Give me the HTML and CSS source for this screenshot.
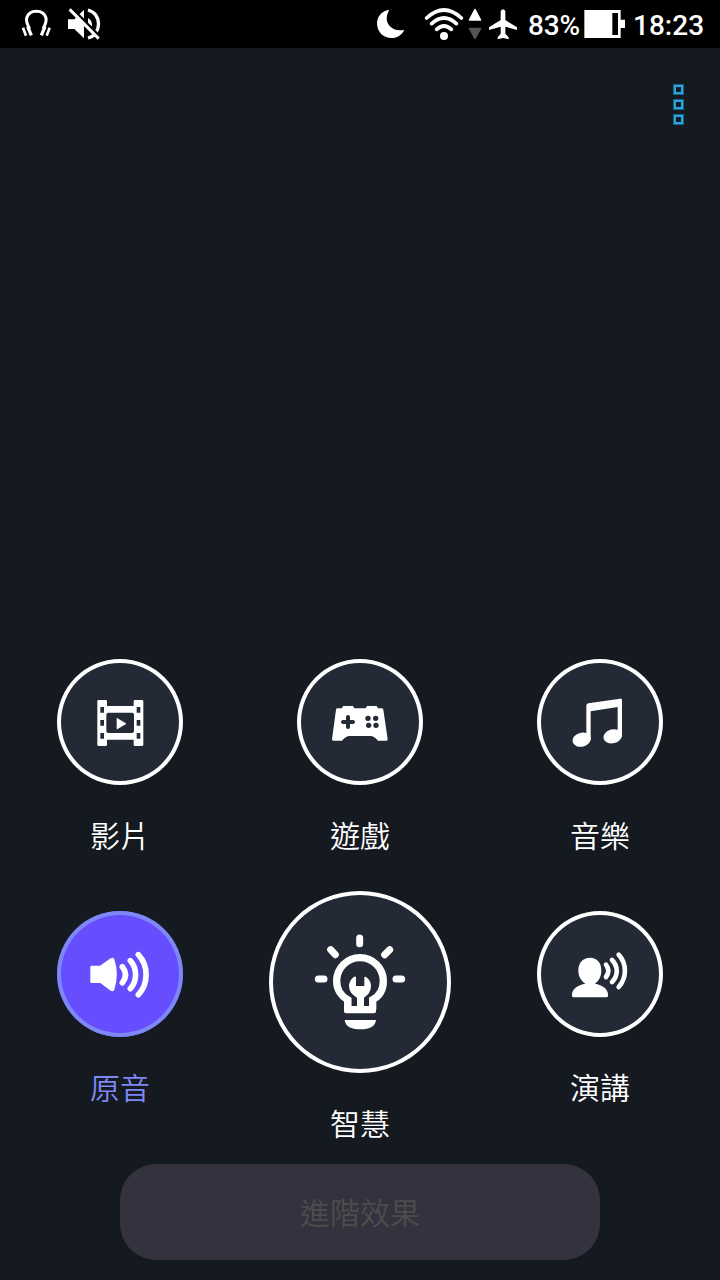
FILE: index.html
```html
<!DOCTYPE html>
<html lang="zh-Hant">
<head>
<meta charset="utf-8">
<title>音效模式</title>
<link rel="stylesheet" href="styles.css">
</head>
<body>
<div class="screen">
  <header class="status">
    <svg class="status-headphones" viewBox="60 0 99 144" fill="none" stroke="#fff">
      <path d="M89 86C83 76 78 64 80 54C84 40 94 34 109 34C124 34 134 40 138 54C140 64 135 76 129 86" stroke-width="9"/>
      <path d="M83 80L94 106M135 80L124 106" stroke-width="10"/>
      <path d="M69 83L78 107M149 83L140 107" stroke-width="8"/>
    </svg>
    <svg class="status-mute" viewBox="198 0 108 144">
      <path d="M204 58H223L252 29V115L223 87H204Z" fill="#fff"/>
      <path d="M264 30C306 40 306 104 264 114" fill="none" stroke="#fff" stroke-width="10"/>
      <path d="M264 54Q275 60 276 72T264 90Z" fill="#fff"/>
      <path d="M216 27L304 115" stroke="#000" stroke-width="10"/>
      <path d="M209 28L296 116" stroke="#fff" stroke-width="9"/>
    </svg>
    <div class="status-right">
      <svg class="status-moon" viewBox="30 0 96 144"><path d="M73 29C46 34 36 53 36 71C37 97 56 114 80 114C98 114 111 104 118 89C101 94 84 89 74 78C62 65 63 45 73 29Z" fill="#fff"/></svg>
      <svg class="status-wifi" viewBox="177 0 120 144" fill="none" stroke="#fff" stroke-width="11" stroke-linecap="round">
        <path d="M185 54Q237 6 289 54M200 71Q237 37 274 71M215 88Q237 68 259 88"/>
        <circle cx="237" cy="108" r="12" fill="#fff" stroke="none"/>
      </svg>
      <svg class="status-arrows" viewBox="306 0 48 144" stroke-linejoin="round" stroke-width="4">
        <path d="M330 28L347 60H313Z" fill="#fff" stroke="#fff"/>
        <path d="M313 85H347L330 116Z" fill="#555" stroke="#555"/>
      </svg>
      <svg class="status-plane" viewBox="369 0 90 144"><path d="M407 33Q414 22 421 33V60L456 82V90L421 80V101L431 112V118L414 114L398 118V112L407 101V80L372 90V82L407 60Z" fill="#fff"/></svg>
      <span class="status-percent">83%</span>
      <svg class="status-battery" viewBox="192 0 126 144"><path d="M193 30H302V59H315V84H302V114H193Z" fill="#fff"/><path d="M277 39H294V105H277Z" fill="#000"/></svg>
      <span class="status-time">18:23</span>
    </div>
  </header>

  <div class="toolbar">
    <div class="menu"><i class="menu-dot"></i><i class="menu-dot"></i><i class="menu-dot"></i></div>
  </div>

  <main class="modes">
    <div class="mode">
      <div class="disc">
        <svg class="icon" viewBox="21 27 378 378">
          <path fill="#fff" fill-rule="evenodd" d="M146 150H167Q171 150 171 154V168H251V154Q251 150 255 150H276Q280 150 280 154V284Q280 288 276 288H255Q251 288 251 284V269H171V284Q171 288 167 288H146Q142 288 142 284V154Q142 150 146 150ZM175 188Q169 188 169 194V243Q169 249 175 249H246Q252 249 252 243V194Q252 188 246 188ZM151 171V188H162V171ZM151 210V227H162V210ZM151 249V266H162V249ZM260 171V188H271V171ZM260 210V227H271V210ZM260 249V266H271V249Z"/>
          <path fill="#fff" stroke="#fff" stroke-width="2" stroke-linejoin="round" d="M201 205L228 221L201 237Z"/>
        </svg>
      </div>
      <span class="label">影片</span>
    </div>
    <div class="mode">
      <div class="disc">
        <svg class="icon" viewBox="21 27 378 378">
          <path fill="#fff" d="M142 175H156L159 168H189L193 175H227L231 168H260L264 175H275Q279 175 280 179L293 268Q293 272 289 272H264Q252 258 242 258H178Q168 258 156 272H130Q126 272 126 268L138 179Q139 175 142 175Z"/>
          <path d="M174 201V231M159 216H189" fill="none" stroke="#232a36" stroke-width="12" stroke-linecap="round"/>
          <g fill="#232a36"><circle cx="234" cy="205" r="8"/><circle cx="257" cy="205" r="8"/><circle cx="236" cy="226" r="8"/><circle cx="258" cy="226" r="8"/></g>
        </svg>
      </div>
      <span class="label">遊戲</span>
    </div>
    <div class="mode">
      <div class="disc">
        <svg class="icon" viewBox="21 27 378 378" fill="#fff">
          <path d="M169 167Q169 161 175 160L270 146Q276 145 276 151V260H263V171L182 184V268H169Z"/>
          <ellipse cx="155" cy="269" rx="28" ry="21" transform="rotate(-15 155 269)"/>
          <ellipse cx="248" cy="259" rx="28" ry="21" transform="rotate(-15 248 259)"/>
        </svg>
      </div>
      <span class="label">音樂</span>
    </div>
    <div class="mode mode-lowered mode-selected">
      <div class="disc">
        <svg class="icon" viewBox="21 18 378 378">
          <path fill="#fff" d="M125 182H150L182 160Q190 156 193 163Q208 207 193 254Q190 261 182 257L151 234H125Q121 234 121 230V186Q121 182 125 182Z"/>
          <path fill="none" stroke="#fff" stroke-width="17" stroke-linecap="round" d="M217 185Q236 209 217 233M241 167C262 190 262 229 241 251M265 149C296 182 296 237 265 269"/>
        </svg>
      </div>
      <span class="label">原音</span>
    </div>
    <div class="mode">
      <div class="disc disc-large">
        <svg class="icon" viewBox="27 18 546 546" fill="none" stroke="#fff">
          <path stroke-width="21" stroke-linecap="round" d="M299 159V176M212 194L226 209M389 194L374 209M175 282H192M408 282H425"/>
          <path stroke-width="22" d="M263 374V344C244 334 230 314 230 288A70 70 0 0 1 370 288C370 314 357 334 338 344V374"/>
          <path fill="#fff" stroke="none" d="M252 363H348V379Q348 385 342 385H258Q252 385 252 379ZM254 405H348Q345 433 301 433T254 405Z"/>
          <path fill="#fff" stroke="none" d="M288 276V303H313V276Q316 274 321 278Q333 288 333 304Q332 326 312 338V366H291V338Q268 326 267 304Q267 288 280 277Q285 273 288 276Z"/>
          <path fill="#fff" stroke="none" d="M252 335L274 340V380H252ZM348 335L327 340V380H348Z"/>
        </svg>
      </div>
      <span class="label">智慧</span>
    </div>
    <div class="mode mode-lowered">
      <div class="disc">
        <svg class="icon" viewBox="21 18 378 378">
          <path fill="#fff" d="M180 158C201 158 214 173 214 196C214 216 206 229 195 236C217 240 234 252 234 268V272Q234 277 229 277H131Q126 277 126 272V268C126 252 144 240 166 236C153 228 145 215 145 196C145 173 159 158 180 158Z"/>
          <path fill="none" stroke="#fff" stroke-width="14" stroke-linecap="round" d="M228 179Q242 197 228 216M246 165C265 184 265 212 246 231M266 149C291 176 291 218 266 246"/>
        </svg>
      </div>
      <span class="label">演講</span>
    </div>
  </main>

  <button class="advanced" disabled>進階效果</button>
</div>
</body>
</html>
```

FILE: styles.css
```css
* { box-sizing: border-box; }

body {
  margin: 0;
  background: #151920;
  color: #fff;
  font-family: Roboto, "Noto Sans CJK TC", sans-serif;
}

svg { display: block; flex: none; }

.screen {
  display: flex;
  flex-direction: column;
  align-items: center;
  width: 720px;
  height: 1280px;
  padding-bottom: 20px;
}

.status {
  display: flex;
  width: 100%;
  height: 48px;
  padding: 0 16px 0 20px;
  background: #000;
  font-size: 28px;
  font-weight: 500;
  line-height: 51px;
  white-space: nowrap;
}
.status svg { height: 48px; }
.status-headphones { width: 33px; }
.status-mute { width: 36px; margin-left: 13px; }
.status-right { display: flex; margin-left: auto; }
.status-moon { width: 32px; }
.status-wifi { width: 40px; margin-left: 17px; }
.status-arrows { width: 16px; margin-left: 3px; }
.status-plane { width: 30px; margin-left: 5px; }
.status-percent { width: 52px; margin-left: 10px; letter-spacing: -0.2px; }
.status-battery { width: 42px; margin-left: 4px; }
.status-time { width: 71px; margin-left: 7px; }

.toolbar {
  display: flex;
  justify-content: flex-end;
  width: 100%;
  padding: 36px 36px 0 0;
}
.menu { display: flex; flex-direction: column; gap: 4px; }
.menu-dot {
  width: 11px;
  height: 11px;
  border: 1px solid #14658a;
  box-shadow: inset 0 0 0 2px #2aa6dc;
}

.modes {
  display: grid;
  grid-template-columns: repeat(3, 240px);
  row-gap: 37px;
  margin-top: auto;
}
.mode {
  display: flex;
  flex-direction: column;
  align-items: center;
  gap: 33px;
}
.mode-lowered { padding-top: 20px; }

.disc {
  width: 126px;
  height: 126px;
  border-radius: 50%;
  background: #232a36;
  box-shadow: inset 0 0 0 4px #fff;
}
.disc-large { width: 182px; height: 182px; }
.icon { width: 100%; height: 100%; }

.label {
  height: 36px;
  font-family: "Noto Sans CJK TC", sans-serif;
  font-size: 30px;
  font-weight: 350;
  line-height: 32px;
}
.mode-selected .disc { background: #664eff; box-shadow: inset 0 0 0 4px #7d88f5; }
.mode-selected .label { color: #7d88f5; }

.advanced {
  width: 480px;
  height: 96px;
  margin-top: 22px;
  padding: 0 0 3px;
  border: 0;
  border-radius: 36px;
  background: #33323e;
  color: #4d4d4d;
  font-family: "Noto Sans CJK TC", sans-serif;
  font-size: 30px;
  font-weight: 350;
}
```
